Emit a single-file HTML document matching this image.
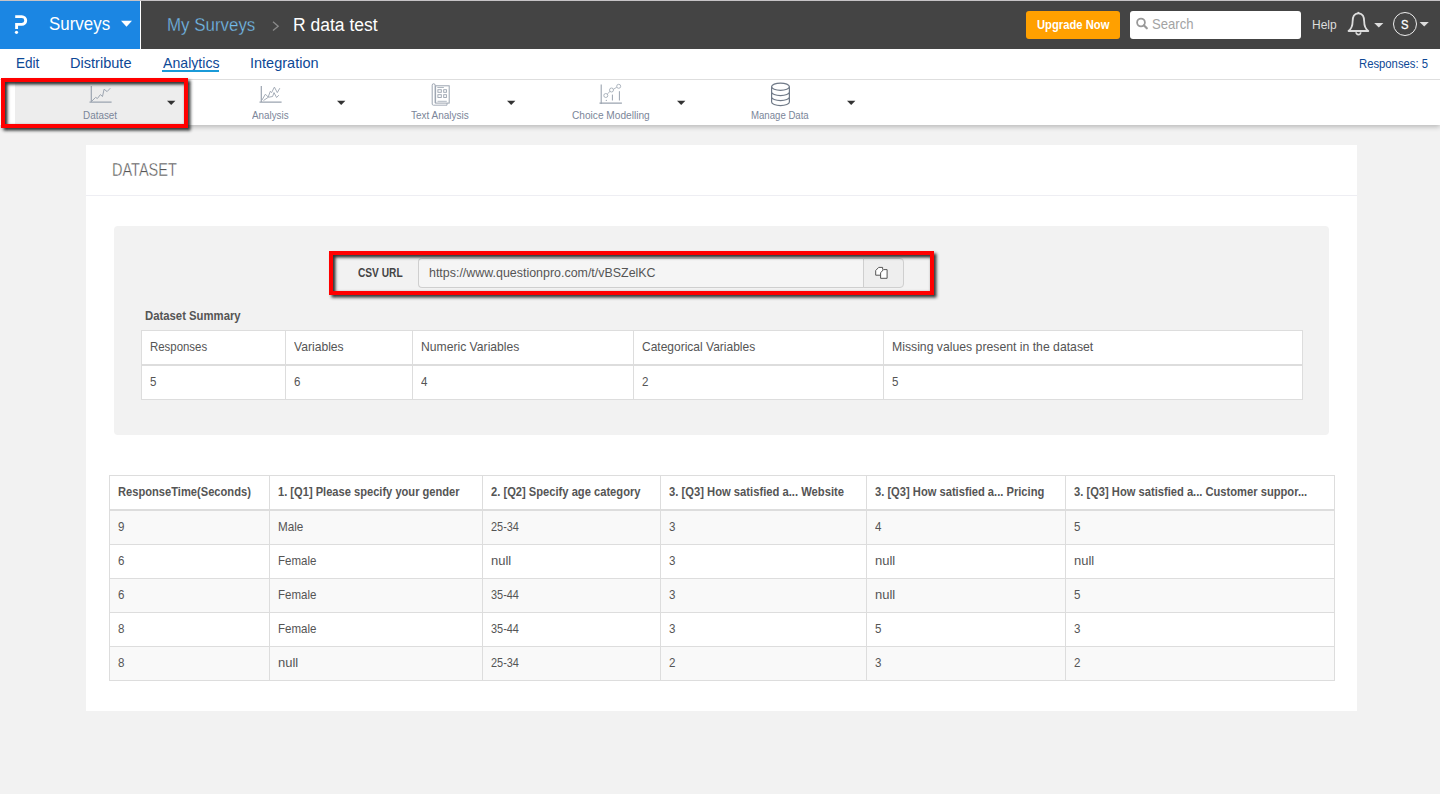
<!DOCTYPE html>
<html><head><meta charset="utf-8"><style>
html,body{margin:0;padding:0}
body{width:1440px;height:794px;position:relative;overflow:hidden;background:#f2f2f2;font-family:"Liberation Sans",sans-serif}
.t{position:absolute;white-space:nowrap;transform-origin:0 0}
</style></head><body>
<div style="position:absolute;left:0;top:0;width:1440px;height:1px;background:#c6c3c6"></div><div style="position:absolute;left:0;top:1px;width:1440px;height:48px;background:#444"></div><div style="position:absolute;left:0;top:1px;width:140px;height:48px;background:#1b86e3"></div><div style="position:absolute;left:140px;top:1px;width:1px;height:48px;background:#fff"></div><svg style="position:absolute;left:0;top:0" width="40" height="40"><path d="M15.2 16.6 H21.8 A3.9 3.9 0 0 1 21.8 24.4 H16.6 V29" fill="none" stroke="#fff" stroke-width="2.9"/><circle cx="16.5" cy="32.3" r="1.6" fill="#fff"/></svg><span class="t" id="t0" style="left:49.40px;top:15.14px;font-size:18.5px;line-height:18.5px;color:#fff;transform:scaleX(0.9140);">Surveys</span>
<svg style="position:absolute;left:120px;top:20px" width="13" height="8"><path d="M1 0.8 H12 L6.5 6.8Z" fill="#fff"/></svg><span class="t" id="t1" style="left:166.70px;top:15.96px;font-size:18px;line-height:18px;color:#74bdec;transform:scaleX(0.9394);-webkit-text-stroke:0.3px #444;">My Surveys</span>
<svg style="position:absolute;left:270px;top:20px" width="12" height="12"><path d="M3 1.8 L8.2 6.2 L3 10.6" fill="none" stroke="#8a8a8a" stroke-width="1.3"/></svg><span class="t" id="t2" style="left:293.40px;top:15.96px;font-size:18px;line-height:18px;color:#fff;transform:scaleX(0.9719);">R data test</span>
<div style="position:absolute;left:1026px;top:11px;width:94px;height:28px;border-radius:3px;background:#ffa000"></div><span class="t" id="t3" style="left:1036.70px;top:17.74px;font-size:13px;line-height:13px;color:#fff;font-weight:bold;transform:scaleX(0.8652);">Upgrade Now</span>
<div style="position:absolute;left:1130px;top:11px;width:171px;height:28px;border-radius:3px;background:#fff"></div><svg style="position:absolute;left:1134px;top:16px" width="16" height="16"><circle cx="7" cy="6.5" r="3.9" fill="none" stroke="#999" stroke-width="1.8"/><path d="M9.8 9.3 L12.8 12.3" stroke="#999" stroke-width="2.2" stroke-linecap="round"/></svg><span class="t" id="t4" style="left:1151.50px;top:17.32px;font-size:14.5px;line-height:14.5px;color:#a3a3a3;transform:scaleX(0.9032);">Search</span>
<span class="t" id="t5" style="left:1311.70px;top:17.77px;font-size:13.5px;line-height:13.5px;color:#ddd;transform:scaleX(0.8901);">Help</span>
<svg style="position:absolute;left:1344px;top:10px" width="30" height="28"><path d="M14.4 3.3 C9.9 3.3 8.6 7.2 8.6 11.5 C8.6 15.8 7.4 18.8 4.5 21 H24.3 C21.4 18.8 20.2 15.8 20.2 11.5 C20.2 7.2 18.9 3.3 14.4 3.3Z" fill="none" stroke="#ddd" stroke-width="1.8" stroke-linejoin="round"/><path d="M14.4 1.9 V3.3" stroke="#ddd" stroke-width="1.8"/><path d="M12.1 22.3 A2.3 2.3 0 0 0 16.7 22.3" fill="none" stroke="#ddd" stroke-width="1.6"/></svg><svg style="position:absolute;left:1373px;top:22px" width="12" height="8"><path d="M1.2 0.9 H10.4 L5.8 5.6Z" fill="#ddd"/></svg><div style="position:absolute;left:1393px;top:12px;width:22px;height:22px;border:1.3px solid #eee;border-radius:50%"></div><span class="t" id="t6" style="left:1401.00px;top:17.77px;font-size:13.5px;line-height:13.5px;color:#fff;transform:scaleX(0.8333);-webkit-text-stroke:0.3px #fff;">S</span>
<svg style="position:absolute;left:1419px;top:21px" width="12" height="8"><path d="M0.6 0.9 H9.8 L5.2 5.6Z" fill="#ddd"/></svg><div style="position:absolute;left:0;top:80px;width:1440px;height:45px;background:#fff;box-shadow:0 2px 5px rgba(0,0,0,.24)"></div><div style="position:absolute;left:0;top:49px;width:1440px;height:30px;background:#fff"></div><span class="t" id="t7" style="left:15.90px;top:55.62px;font-size:14.5px;line-height:14.5px;color:#0d4896;transform:scaleX(0.9360);">Edit</span>
<span class="t" id="t8" style="left:70.30px;top:55.62px;font-size:14.5px;line-height:14.5px;color:#0d4896;transform:scaleX(1.0041);">Distribute</span>
<span class="t" id="t9" style="left:162.50px;top:55.62px;font-size:14.5px;line-height:14.5px;color:#0d4896;transform:scaleX(0.9741);">Analytics</span>
<div style="position:absolute;left:162px;top:70px;width:57px;height:2px;background:#1a9ad8"></div><span class="t" id="t10" style="left:250.00px;top:55.62px;font-size:14.5px;line-height:14.5px;color:#0d4896;">Integration</span>
<span class="t" id="t11" style="left:1358.60px;top:56.89px;font-size:13px;line-height:13px;color:#0d4896;transform:scaleX(0.8679);">Responses: 5</span>
<div style="position:absolute;left:0;top:79px;width:1440px;height:1px;background:#dedede"></div><div style="position:absolute;left:15px;top:80px;width:170px;height:45px;background:#ededed"></div><svg style="position:absolute;left:80px;top:80px" width="40" height="30"><path d="M11.3 5.9 V22.2 M9.5 22.2 H31.6" stroke="#9ba4b0" stroke-width="1.2" fill="none"/><path d="M11.3 21.6 L15.6 17.4 L17.4 18.5 L20.4 14.6 L22.5 16.5 L24.1 9.2 L27.1 11.6 L30.3 8.2" stroke="#9ba4b0" stroke-width="1" fill="none"/></svg><svg style="position:absolute;left:250px;top:80px" width="40" height="30"><path d="M11.3 5.9 V22.2 M9.5 22.2 H31.6" stroke="#9ba4b0" stroke-width="1.2" fill="none"/><path d="M12 20 L15.4 14.2 L18.2 17 L20.3 11.3 L21.6 12.6 L24.4 7.1 L27.3 12.6 L29.8 8.2 M13.5 20.5 L18.2 17.3 L22.6 16.5 L24 12.6 L26.6 17.5 L28.8 15.2" stroke="#9ba4b0" stroke-width="0.9" fill="none"/></svg><svg style="position:absolute;left:420px;top:80px" width="40" height="30"><path d="M12.2 24 V5.2 A1.45 1.45 0 0 1 15.1 5.2 V23.1" stroke="#9ba4b0" stroke-width="1" fill="none"/><rect x="15.6" y="5.8" width="13.6" height="17.3" stroke="#9ba4b0" stroke-width="1" fill="none"/><path d="M12.2 24 A1.2 1.2 0 0 0 13.4 25.2 H27 V23.1" stroke="#9ba4b0" stroke-width="0.9" fill="none"/><path d="M17.3 7.5 H23.9 M17.5 21.3 H26.8" stroke="#9ba4b0" stroke-width="0.8"/><rect x="17.9" y="9.7" width="3.4" height="2.6" stroke="#9ba4b0" stroke-width="0.9" fill="none"/><rect x="23.7" y="9.7" width="2.7" height="2.6" stroke="#9ba4b0" stroke-width="0.9" fill="none"/><rect x="17.9" y="14.7" width="3.4" height="2.8" stroke="#9ba4b0" stroke-width="0.9" fill="none"/><rect x="23.7" y="14.7" width="2.7" height="2.8" stroke="#9ba4b0" stroke-width="0.9" fill="none"/></svg><svg style="position:absolute;left:590px;top:80px" width="40" height="30"><path d="M11.2 4.6 V24 M9.5 23.1 H31.9" stroke="#9ba4b0" stroke-width="1.1" fill="none"/><circle cx="15.8" cy="15.5" r="2" stroke="#9ba4b0" stroke-width="0.8" fill="none"/><circle cx="21.5" cy="10" r="2" stroke="#9ba4b0" stroke-width="0.8" fill="none"/><circle cx="28.7" cy="6.3" r="2" stroke="#9ba4b0" stroke-width="0.8" fill="none"/><path d="M17.3 14 L20 11.4 M23.4 9.3 L26.8 7.2" stroke="#9ba4b0" stroke-width="0.8"/><circle cx="16.3" cy="20.4" r="0.6" fill="#9ba4b0"/><path d="M22.4 14.6 V20.5 M29.4 11.2 V20.5" stroke="#9ba4b0" stroke-width="1"/></svg><svg style="position:absolute;left:760px;top:80px" width="40" height="30"><ellipse cx="20.5" cy="6.7" rx="8.9" ry="3.6" stroke="#6f7987" stroke-width="1.2" fill="none"/><path d="M11.6 6.7 V22 A8.9 3.6 0 0 0 29.4 22 V6.7 M11.6 12 A8.9 3.6 0 0 0 29.4 12 M11.6 17 A8.9 3.6 0 0 0 29.4 17" stroke="#6f7987" stroke-width="1.2" fill="none"/></svg><span class="t" id="t12" style="left:83.30px;top:109.79px;font-size:11px;line-height:11px;color:#7b8699;transform:scaleX(0.8997);">Dataset</span>
<span class="t" id="t13" style="left:251.70px;top:109.79px;font-size:11px;line-height:11px;color:#7b8699;transform:scaleX(0.8938);">Analysis</span>
<span class="t" id="t14" style="left:411.25px;top:109.79px;font-size:11px;line-height:11px;color:#7b8699;transform:scaleX(0.9080);">Text Analysis</span>
<span class="t" id="t15" style="left:571.50px;top:109.79px;font-size:11px;line-height:11px;color:#7b8699;transform:scaleX(0.9206);">Choice Modelling</span>
<span class="t" id="t16" style="left:751.25px;top:109.79px;font-size:11px;line-height:11px;color:#7b8699;transform:scaleX(0.8737);">Manage Data</span>
<svg style="position:absolute;left:167px;top:100px" width="10" height="6"><path d="M0 0.8 H8.4 L4.2 4.9Z" fill="#333"/></svg><svg style="position:absolute;left:337px;top:100px" width="10" height="6"><path d="M0 0.8 H8.4 L4.2 4.9Z" fill="#333"/></svg><svg style="position:absolute;left:507px;top:100px" width="10" height="6"><path d="M0 0.8 H8.4 L4.2 4.9Z" fill="#333"/></svg><svg style="position:absolute;left:677px;top:100px" width="10" height="6"><path d="M0 0.8 H8.4 L4.2 4.9Z" fill="#333"/></svg><svg style="position:absolute;left:847px;top:100px" width="10" height="6"><path d="M0 0.8 H8.4 L4.2 4.9Z" fill="#333"/></svg><div style="position:absolute;left:86px;top:145px;width:1271px;height:566px;background:#fff"></div><span class="t" id="t17" style="left:112.20px;top:160.01px;font-size:19px;line-height:19px;color:#555;transform:scaleX(0.7642);-webkit-text-stroke:0.4px #fff;">DATASET</span>
<div style="position:absolute;left:86px;top:195px;width:1271px;height:1px;background:#eeeef3"></div><div style="position:absolute;left:114px;top:226px;width:1215px;height:209px;background:#f2f2f2;border-radius:4px"></div><span class="t" id="t18" style="left:357.90px;top:267.02px;font-size:12.5px;line-height:12.5px;color:#444;font-weight:bold;transform:scaleX(0.8131);">CSV URL</span>
<div style="position:absolute;left:418px;top:258px;width:446px;height:30px;background:#f5f5f5;border:1px solid #cfcfcf;border-right:none;border-radius:4px 0 0 4px;box-sizing:border-box"></div><div style="position:absolute;left:863px;top:258px;width:41px;height:30px;background:#eee;border:1px solid #cfcfcf;border-radius:0 4px 4px 0;box-sizing:border-box"></div><svg style="position:absolute;left:872px;top:264px" width="18" height="18"><path d="M8.6 11.2 H3.7 V6.5 L6.7 3.4 H10.6 V5.6" fill="#fff" stroke="#555" stroke-width="1"/><path d="M8.6 14.3 V8.8 L11.5 5.6 H15.1 V14.3Z" fill="#fff" stroke="#555" stroke-width="1"/></svg><span class="t" id="t19" style="left:429.20px;top:266.49px;font-size:13px;line-height:13px;color:#555;transform:scaleX(0.9561);">https://www.questionpro.com/t/vBSZelKC</span>
<span class="t" id="t20" style="left:144.50px;top:310.23px;font-size:12.6px;line-height:12.6px;color:#555;font-weight:bold;transform:scaleX(0.8990);">Dataset Summary</span>
<div style="position:absolute;left:141px;top:330px;width:1162px;height:70px;background:#fff;border:1px solid #ddd;box-sizing:border-box"></div><div style="position:absolute;left:141px;top:364px;width:1162px;height:2px;background:#ddd"></div><div style="position:absolute;left:285px;top:330px;width:1px;height:70px;background:#ddd"></div><div style="position:absolute;left:412px;top:330px;width:1px;height:70px;background:#ddd"></div><div style="position:absolute;left:633px;top:330px;width:1px;height:70px;background:#ddd"></div><div style="position:absolute;left:883px;top:330px;width:1px;height:70px;background:#ddd"></div><span class="t" id="t21" style="left:150.10px;top:340.29px;font-size:13px;line-height:13px;color:#555;transform:scaleX(0.8778);">Responses</span>
<span class="t" id="t22" style="left:293.60px;top:340.29px;font-size:13px;line-height:13px;color:#555;transform:scaleX(0.9333);">Variables</span>
<span class="t" id="t23" style="left:421.10px;top:340.29px;font-size:13px;line-height:13px;color:#555;transform:scaleX(0.9349);">Numeric Variables</span>
<span class="t" id="t24" style="left:641.80px;top:340.29px;font-size:13px;line-height:13px;color:#555;transform:scaleX(0.9233);">Categorical Variables</span>
<span class="t" id="t25" style="left:891.90px;top:340.29px;font-size:13px;line-height:13px;color:#555;transform:scaleX(0.9406);">Missing values present in the dataset</span>
<span class="t" id="t26" style="left:150.00px;top:375.19px;font-size:13px;line-height:13px;color:#555;transform:scaleX(0.8900);">5</span>
<span class="t" id="t27" style="left:294.00px;top:375.19px;font-size:13px;line-height:13px;color:#555;transform:scaleX(0.8900);">6</span>
<span class="t" id="t28" style="left:421.00px;top:375.19px;font-size:13px;line-height:13px;color:#555;transform:scaleX(0.8900);">4</span>
<span class="t" id="t29" style="left:642.00px;top:375.19px;font-size:13px;line-height:13px;color:#555;transform:scaleX(0.8900);">2</span>
<span class="t" id="t30" style="left:892.00px;top:375.19px;font-size:13px;line-height:13px;color:#555;transform:scaleX(0.8900);">5</span>
<div style="position:absolute;left:109px;top:475px;width:1226px;height:206px;background:#fff;border:1px solid #ddd;box-sizing:border-box"></div><div style="position:absolute;left:110px;top:511px;width:1224px;height:33px;background:#f9f9f9"></div><div style="position:absolute;left:110px;top:579px;width:1224px;height:33px;background:#f9f9f9"></div><div style="position:absolute;left:110px;top:647px;width:1224px;height:33px;background:#f9f9f9"></div><div style="position:absolute;left:109px;top:509px;width:1226px;height:2px;background:#ddd"></div><div style="position:absolute;left:109px;top:544px;width:1226px;height:1px;background:#ddd"></div><div style="position:absolute;left:109px;top:578px;width:1226px;height:1px;background:#ddd"></div><div style="position:absolute;left:109px;top:612px;width:1226px;height:1px;background:#ddd"></div><div style="position:absolute;left:109px;top:646px;width:1226px;height:1px;background:#ddd"></div><div style="position:absolute;left:269px;top:475px;width:1px;height:206px;background:#ddd"></div><div style="position:absolute;left:482px;top:475px;width:1px;height:206px;background:#ddd"></div><div style="position:absolute;left:660px;top:475px;width:1px;height:206px;background:#ddd"></div><div style="position:absolute;left:866px;top:475px;width:1px;height:206px;background:#ddd"></div><div style="position:absolute;left:1065px;top:475px;width:1px;height:206px;background:#ddd"></div><span class="t" id="t31" style="left:117.80px;top:484.99px;font-size:13px;line-height:13px;color:#555;font-weight:bold;transform:scaleX(0.8569);">ResponseTime(Seconds)</span>
<span class="t" id="t32" style="left:278.00px;top:484.99px;font-size:13px;line-height:13px;color:#555;font-weight:bold;transform:scaleX(0.8550);">1. [Q1] Please specify your gender</span>
<span class="t" id="t33" style="left:490.50px;top:484.99px;font-size:13px;line-height:13px;color:#555;font-weight:bold;transform:scaleX(0.8587);">2. [Q2] Specify age category</span>
<span class="t" id="t34" style="left:668.60px;top:484.99px;font-size:13px;line-height:13px;color:#555;font-weight:bold;transform:scaleX(0.8631);">3. [Q3] How satisfied a... Website</span>
<span class="t" id="t35" style="left:874.70px;top:484.99px;font-size:13px;line-height:13px;color:#555;font-weight:bold;transform:scaleX(0.8585);">3. [Q3] How satisfied a... Pricing</span>
<span class="t" id="t36" style="left:1073.60px;top:484.99px;font-size:13px;line-height:13px;color:#555;font-weight:bold;transform:scaleX(0.8586);">3. [Q3] How satisfied a... Customer suppor...</span>
<span class="t" id="t37" style="left:118.00px;top:519.99px;font-size:13px;line-height:13px;color:#555;transform:scaleX(0.8900);">9</span>
<span class="t" id="t38" style="left:278.00px;top:519.99px;font-size:13px;line-height:13px;color:#555;transform:scaleX(0.9000);">Male</span>
<span class="t" id="t39" style="left:491.00px;top:519.99px;font-size:13px;line-height:13px;color:#555;transform:scaleX(0.8400);">25-34</span>
<span class="t" id="t40" style="left:669.00px;top:519.99px;font-size:13px;line-height:13px;color:#555;transform:scaleX(0.8900);">3</span>
<span class="t" id="t41" style="left:875.00px;top:519.99px;font-size:13px;line-height:13px;color:#555;transform:scaleX(0.8900);">4</span>
<span class="t" id="t42" style="left:1074.00px;top:519.99px;font-size:13px;line-height:13px;color:#555;transform:scaleX(0.8900);">5</span>
<span class="t" id="t43" style="left:118.00px;top:553.99px;font-size:13px;line-height:13px;color:#555;transform:scaleX(0.8900);">6</span>
<span class="t" id="t44" style="left:278.00px;top:553.99px;font-size:13px;line-height:13px;color:#555;transform:scaleX(0.8850);">Female</span>
<span class="t" id="t45" style="left:491.00px;top:553.99px;font-size:13px;line-height:13px;color:#555;">null</span>
<span class="t" id="t46" style="left:669.00px;top:553.99px;font-size:13px;line-height:13px;color:#555;transform:scaleX(0.8900);">3</span>
<span class="t" id="t47" style="left:875.00px;top:553.99px;font-size:13px;line-height:13px;color:#555;">null</span>
<span class="t" id="t48" style="left:1074.00px;top:553.99px;font-size:13px;line-height:13px;color:#555;">null</span>
<span class="t" id="t49" style="left:118.00px;top:587.99px;font-size:13px;line-height:13px;color:#555;transform:scaleX(0.8900);">6</span>
<span class="t" id="t50" style="left:278.00px;top:587.99px;font-size:13px;line-height:13px;color:#555;transform:scaleX(0.8850);">Female</span>
<span class="t" id="t51" style="left:491.00px;top:587.99px;font-size:13px;line-height:13px;color:#555;transform:scaleX(0.8400);">35-44</span>
<span class="t" id="t52" style="left:669.00px;top:587.99px;font-size:13px;line-height:13px;color:#555;transform:scaleX(0.8900);">3</span>
<span class="t" id="t53" style="left:875.00px;top:587.99px;font-size:13px;line-height:13px;color:#555;">null</span>
<span class="t" id="t54" style="left:1074.00px;top:587.99px;font-size:13px;line-height:13px;color:#555;transform:scaleX(0.8900);">5</span>
<span class="t" id="t55" style="left:118.00px;top:621.99px;font-size:13px;line-height:13px;color:#555;transform:scaleX(0.8900);">8</span>
<span class="t" id="t56" style="left:278.00px;top:621.99px;font-size:13px;line-height:13px;color:#555;transform:scaleX(0.8850);">Female</span>
<span class="t" id="t57" style="left:491.00px;top:621.99px;font-size:13px;line-height:13px;color:#555;transform:scaleX(0.8400);">35-44</span>
<span class="t" id="t58" style="left:669.00px;top:621.99px;font-size:13px;line-height:13px;color:#555;transform:scaleX(0.8900);">3</span>
<span class="t" id="t59" style="left:875.00px;top:621.99px;font-size:13px;line-height:13px;color:#555;transform:scaleX(0.8900);">5</span>
<span class="t" id="t60" style="left:1074.00px;top:621.99px;font-size:13px;line-height:13px;color:#555;transform:scaleX(0.8900);">3</span>
<span class="t" id="t61" style="left:118.00px;top:655.99px;font-size:13px;line-height:13px;color:#555;transform:scaleX(0.8900);">8</span>
<span class="t" id="t62" style="left:278.00px;top:655.99px;font-size:13px;line-height:13px;color:#555;">null</span>
<span class="t" id="t63" style="left:491.00px;top:655.99px;font-size:13px;line-height:13px;color:#555;transform:scaleX(0.8400);">25-34</span>
<span class="t" id="t64" style="left:669.00px;top:655.99px;font-size:13px;line-height:13px;color:#555;transform:scaleX(0.8900);">2</span>
<span class="t" id="t65" style="left:875.00px;top:655.99px;font-size:13px;line-height:13px;color:#555;transform:scaleX(0.8900);">3</span>
<span class="t" id="t66" style="left:1074.00px;top:655.99px;font-size:13px;line-height:13px;color:#555;transform:scaleX(0.8900);">2</span>
<div style="position:absolute;left:1px;top:78px;width:187px;height:50px;border:4px solid #f00;box-sizing:border-box;box-shadow:2px 2px 3px 0.5px rgba(25,30,30,.9), inset 2px 2px 3px 0.5px rgba(25,30,30,.9);"></div><div style="position:absolute;left:329px;top:251px;width:605px;height:44px;border:4px solid #f00;box-sizing:border-box;box-shadow:2px 2px 3px 0.5px rgba(25,30,30,.9), inset 2px 2px 3px 0.5px rgba(25,30,30,.9);"></div></body></html>
